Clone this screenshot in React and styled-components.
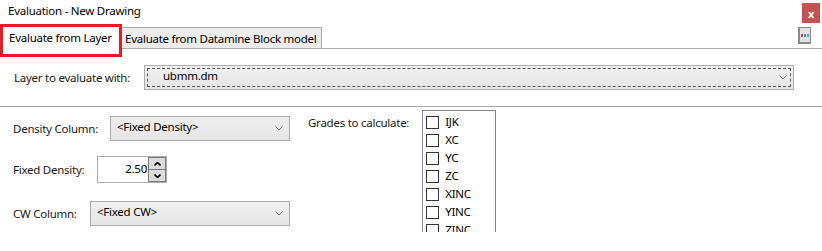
import React from "react";
import styled, { createGlobalStyle } from "styled-components";

const Global = createGlobalStyle`
  html, body { margin: 0; padding: 0; background: #fff; }
  body {
    font-family: "Noto Sans", "Open Sans", sans-serif;
    font-size: 11.5px;
    letter-spacing: -0.25px;
    color: #000;
  }
`;

const Window = styled.div`
  width: 822px;
  height: 251px;
  background: #fff;
  overflow: hidden;
  display: flex;
  flex-direction: column;
`;

const TitleBar = styled.div`
  height: 24px;
  display: flex;
  align-items: center;
  padding-left: 8px;
  .title {
    flex: 1;
    margin-top: -3px;
  }
`;

const CloseButton = styled.div`
  width: 18px;
  height: 20px;
  margin-right: 2px;
  margin-top: 2px;
  background: #c75050;
  color: #fff;
  font-weight: bold;
  font-size: 11px;
  display: flex;
  align-items: center;
  justify-content: center;
`;

const TabStrip = styled.div`
  height: 24px;
  border-bottom: 1px solid #acacac;
  display: flex;
  align-items: flex-start;
  position: relative;
`;

const ActiveTab = styled.div`
  height: 27px;
  width: 110px;
  padding-left: 6px;
  border: 3px solid #e81c24;
  background: #fff;
  display: flex;
  align-items: flex-start;
  white-space: nowrap;
  position: relative;
  z-index: 1;
  span { margin-top: 3px; }
`;

const Tab = styled.div`
  margin-top: 3px;
  height: 20px;
  padding: 0 4px 0 3px;
  background: #ececec;
  border: 1px solid #acacac;
  border-bottom: none;
  border-left: none;
  display: flex;
  align-items: center;
  white-space: nowrap;
`;

const MoreButton = styled.div`
  margin-left: auto;
  margin-right: 11px;
  margin-top: 3px;
  width: 10px;
  height: 14px;
  background: #e1e1e1;
  border: 1px solid #8a8a8a;
  border-width: 1px 1px 2px 2px;
  display: flex;
  align-items: center;
  justify-content: center;
`;

const Section = styled.div`
  display: flex;
  align-items: center;
  padding: 16px 28px 16px 14px;
  border-bottom: 1px solid #a6a6a6;
  gap: 11px;
`;

const Label = styled.span`
  color: #1a1a1a;
  white-space: nowrap;
  width: ${(p) => p.$width || "auto"};
`;

const Select = styled.div`
  position: relative;
  height: 25px;
  width: ${(p) => p.$width};
  flex: ${(p) => (p.$grow ? 1 : "none")};
  box-sizing: border-box;
  border: 1px solid #acacac;
  background: linear-gradient(#f0f0f0, #e5e5e5);
  display: flex;
  align-items: center;
  padding: 0 6px 0 ${(p) => p.$pad || "6px"};
  ${(p) =>
    p.$focused &&
    `&::after {
      content: "";
      position: absolute;
      inset: 2px;
      border: 1px dashed #555;
    }`}
  .value { flex: 1; margin-top: -4px; }
`;

const Chevron = () => (
  <svg width="8" height="5" viewBox="0 0 8 5">
    <path d="M0.5 0.5 L4 4 L7.5 0.5" fill="none" stroke="#777" strokeWidth="1" />
  </svg>
);

const Body = styled.div`
  display: flex;
  padding-left: 13px;
  gap: 18px;
`;

const LeftColumn = styled.div`
  display: flex;
  flex-direction: column;
  padding-top: 8px;
`;

const FieldRow = styled.div`
  display: flex;
  align-items: center;
  height: 27px;
  margin-bottom: ${(p) => p.$gap || "16px"};
`;

const NumberBox = styled.div`
  display: flex;
  align-items: center;
  height: 27px;
  box-sizing: border-box;
  border: 1px solid #abadb3;
  width: 70px;
  padding-left: 2px;
  .num {
    width: 47px;
    text-align: right;
    margin-top: -2px;
  }
`;

const Spinner = styled.div`
  display: flex;
  flex-direction: column;
  margin-left: 1px;
`;

const SpinButton = styled.div`
  width: 16px;
  height: 11px;
  background: #dcdcdc;
  border: 1px solid #7a7a7a;
  & + & { border-top: none; height: 11px; }
  display: flex;
  align-items: center;
  justify-content: center;
`;

const Grades = styled.div`
  display: flex;
  padding-top: 3px;
  gap: 13px;
`;

const GradesLabel = styled.span`
  margin-top: 5px;
  color: #1a1a1a;
`;

const ListBox = styled.div`
  width: 74px;
  height: 122px;
  box-sizing: border-box;
  border: 1px solid #828790;
  border-bottom: none;
  overflow: hidden;
  padding: 2px 0 0 3px;
`;

const Item = styled.div`
  display: flex;
  align-items: center;
  height: 18px;
  gap: 6px;
  .box {
    width: 13px;
    height: 13px;
    box-sizing: border-box;
    border: 1px solid #333;
    background: #fff;
  }
  span { margin-top: -2px; }
`;

const grades = ["IJK", "XC", "YC", "ZC", "XINC", "YINC", "ZINC"];

export default function App() {
  return (
    <Window>
      <Global />
      <TitleBar>
        <span className="title">Evaluation - New Drawing</span>
        <CloseButton>x</CloseButton>
      </TitleBar>
      <TabStrip>
        <ActiveTab>
          <span>Evaluate from Layer</span>
        </ActiveTab>
        <Tab>Evaluate from Datamine Block model</Tab>
        <MoreButton>
          <svg width="8" height="3" viewBox="0 0 8 3">
            <rect x="0" y="0" width="2" height="3" fill="#c0504d" />
            <rect x="3" y="0" width="2" height="3" fill="#4f81bd" />
            <rect x="6" y="0" width="2" height="3" fill="#4bacc6" />
          </svg>
        </MoreButton>
      </TabStrip>
      <Section>
        <Label $width="119px">Layer to evaluate with:</Label>
        <Select $grow $focused $pad="18px">
          <span className="value">ubmm.dm</span>
          <Chevron />
        </Select>
      </Section>
      <Body>
        <LeftColumn>
          <FieldRow $gap="14px">
            <Label $width="97px">Density Column:</Label>
            <Select $width="180px">
              <span className="value">&lt;Fixed Density&gt;</span>
              <Chevron />
            </Select>
          </FieldRow>
          <FieldRow $gap="17px">
            <Label $width="84px">Fixed Density:</Label>
            <NumberBox>
              <span className="num">2.50</span>
              <Spinner>
                <SpinButton>
                  <svg width="7" height="4" viewBox="0 0 7 4">
                    <path d="M0.5 3.5 L3.5 0.5 L6.5 3.5" fill="none" stroke="#000" strokeWidth="1.6" />
                  </svg>
                </SpinButton>
                <SpinButton>
                  <svg width="7" height="4" viewBox="0 0 7 4">
                    <path d="M0.5 0.5 L3.5 3.5 L6.5 0.5" fill="none" stroke="#000" strokeWidth="1.6" />
                  </svg>
                </SpinButton>
              </Spinner>
            </NumberBox>
          </FieldRow>
          <FieldRow>
            <Label $width="77px">CW Column:</Label>
            <Select $width="200px">
              <span className="value">&lt;Fixed CW&gt;</span>
              <Chevron />
            </Select>
          </FieldRow>
        </LeftColumn>
        <Grades>
          <GradesLabel>Grades to calculate:</GradesLabel>
          <ListBox>
            {grades.map((g) => (
              <Item key={g}>
                <div className="box" />
                <span>{g}</span>
              </Item>
            ))}
          </ListBox>
        </Grades>
      </Body>
    </Window>
  );
}
